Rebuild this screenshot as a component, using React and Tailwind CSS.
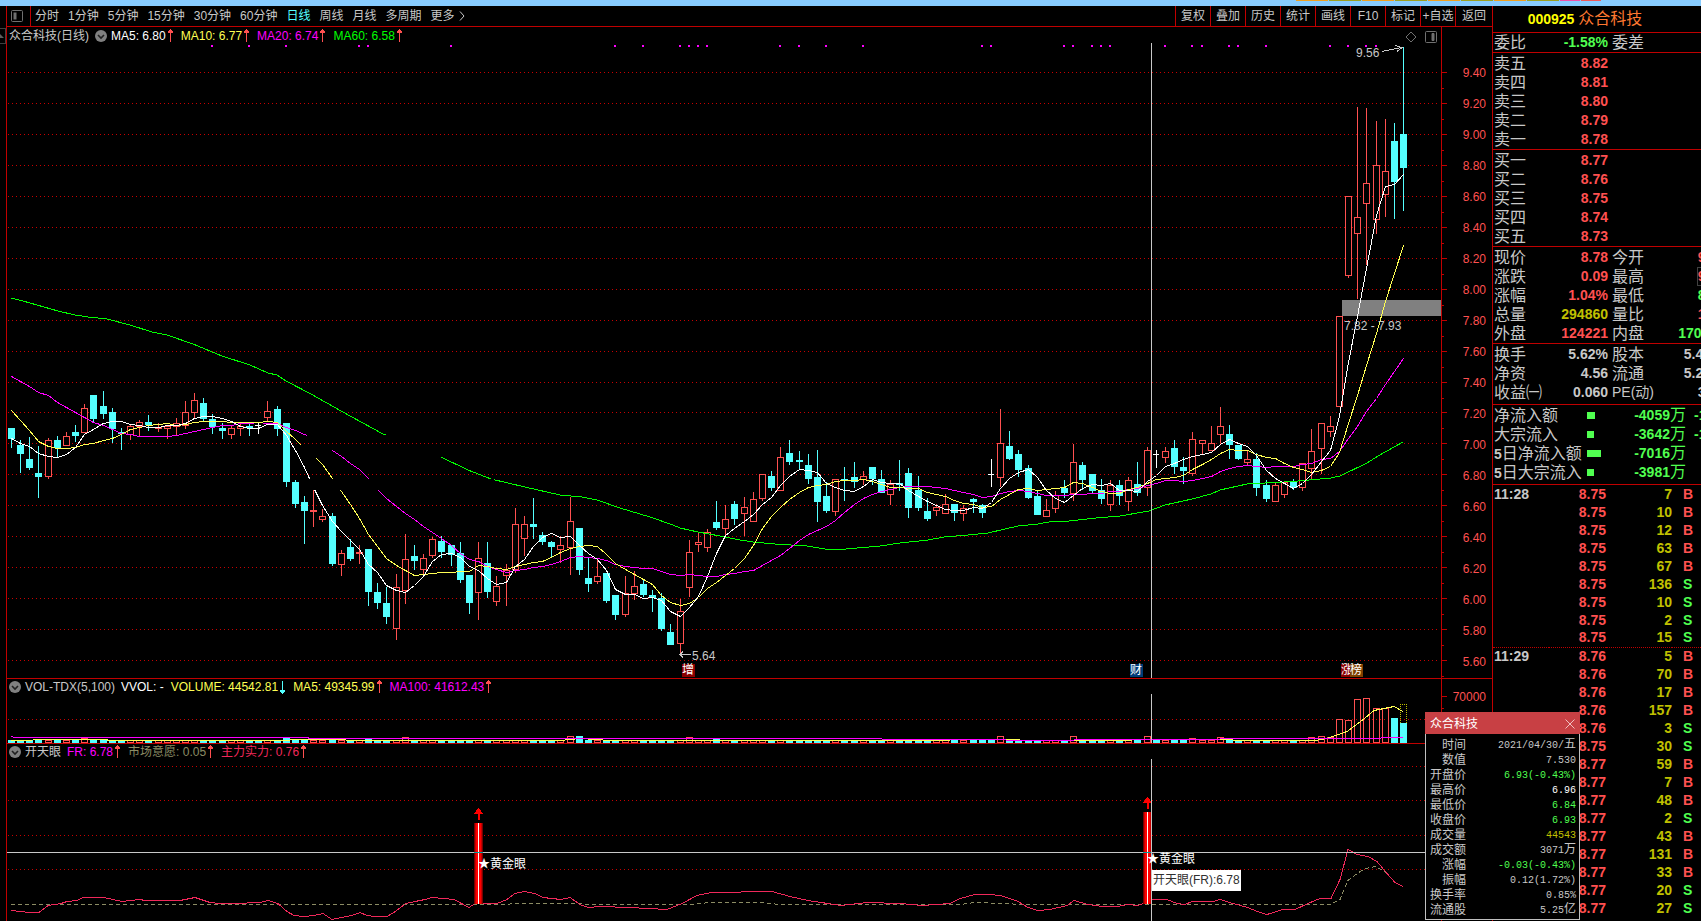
import React from "react";

// Each bar is kind,high,bodyTop,bodyBottom,low. The numbers are thirds of a pixel below `base`.
// U = up (hollow red), D = down (solid cyan), E = open equals close (white cross)
const barRuns = [
  {
    base: 1110,
    bars: `D,175,175,207,234 D,210,225,252,309 D,201,267,294,300 D,228,309,321,384 U,204,210,321,327
      D,198,210,235,261 U,186,198,228,228 D,165,186,198,216 U,102,114,189,189 D,75,75,147,156
      D,63,108,132,147 D,114,126,177,219 D,174,187,192,240 U,165,168,195,210 U,150,156,171,198
      D,135,156,165,183 U,159,171,177,186 U,165,168,177,207 U,144,159,171,198 U,93,126,168,177
      U,69,90,129,144 D,84,99,147,153 D,132,147,172,192 D,159,174,183,207 U,168,174,195,207
      U,162,168,177,198 D,162,168,175,198 E,159,164,164,192 U,93,123,144,153 D,108,117,177,198
      D,159,159,336,351 D,330,336,402,414 D,378,396,423,522 U,360,420,426,471 U,417,438,450,456
      D,429,438,582,588 U,540,549,585,618 D,507,531,567,573 U,525,546,552,582 D,537,537,666,708
      D,639,666,699,717 D,651,699,741,762 U,612,651,777,810 U,492,567,663,702 D,525,558,573,600
      U,552,564,600,612 U,501,507,558,564 D,498,513,546,564 D,525,525,555,588 D,516,549,630,639
      D,615,615,699,732`,
  },
  {
    base: 1200,
    bars: `U,426,474,578,660 D,426,489,576,594 U,528,558,606,618 U,492,510,528,618 U,324,372,510,518
      U,348,372,416,468 D,294,372,381,417 D,396,405,426,435 D,423,426,441,471 U,408,435,450,489
      U,291,363,444,525 D,384,384,510,525 D,474,534,552,576 U,474,528,546,552 D,519,519,603,609
      D,585,585,645,660 U,528,580,645,651 U,513,558,582,600 D,537,552,585,591 D,570,585,594,636
      D,579,594,687,693 D,672,696,735,735 U,597,633,732,765 U,420,456,564,591 U,399,426,435,456
      U,387,396,444,456 D,303,366,384,390 U,315,357,387,405 D,303,312,357,375 U,291,321,342,408
      U,276,297,366,366 U,222,222,297,303 D,213,228,264,273 U,141,171,273,273 D,120,159,186,195
      D,153,180,186,210 D,162,195,237,252 D,150,231,306,366 D,246,288,333,339 U,237,237,336,348
      D,201,237,242,303 D,186,231,246,264 U,213,228,239,255 D,201,201,237,255 D,210,237,279,279
      U,240,252,285,315 D,180,250,255,273 D,204,219,324,354 D,228,270,324,333 D,294,333,357,363
      U,312,321,333,348`,
  },
  {
    base: 1140,
    bars: `U,342,372,402,402 D,372,372,399,423 U,375,384,402,423 D,354,357,366,399 D,372,375,399,414
      E,237,281,281,321 U,87,189,294,321 D,153,198,237,240 D,210,222,270,291 D,255,264,354,357
      D,330,348,405,405 U,357,390,411,411 U,333,345,387,399 D,300,324,339,354 U,192,246,342,363
      D,246,255,300,330 D,282,282,333,339 D,297,330,357,372 U,300,315,375,393 D,300,315,348,375
      U,291,300,366,393 D,246,312,339,348 U,201,210,324,348 E,210,223,223,264 U,201,213,234,249
      D,180,204,261,282 D,231,261,273,312 U,156,177,282,288 U,180,180,192,222 U,138,189,213,213
      U,81,138,165,189 D,135,162,195,237 D,195,195,237,240 U,210,237,249,255 D,219,237,324,348
      D,300,315,357,366 U,306,315,366,366 U,303,306,345,354 D,297,303,324,330 U,249,249,324,333
      U,147,213,267,297 U,129,129,207,282 U,108,138,156,171`,
  },
  {
    base: 90,
    bars: `U,858,858,1131,1131 U,498,498,738,744 U,231,561,612,807 U,234,459,522,705 U,273,405,570,612
      U,267,423,495,561 D,279,333,456,567 D,51,312,414,543`,
  },
];

const xOf = (i) => Math.round(11 + i * 9.158);

const candles = barRuns
  .flatMap(({ base, bars }) =>
    bars.split(/\s+/).map((bar) => {
      const [kind, ...values] = bar.split(",");
      const [high, top, bottom, low] = values.map((v) => Math.round((base + Number(v)) / 3));
      return { kind, high, top, bottom, low, close: kind === "U" ? top : bottom };
    })
  )
  .map((candle, i) => ({ ...candle, x: xOf(i) }));

const movingAverage = (days, lead) =>
  candles
    .map((candle, i) => {
      const y =
        i < lead.length
          ? lead[i]
          : candles.slice(Math.max(0, i - days + 1), i + 1).reduce((sum, c) => sum + c.close, 0) / Math.min(days, i + 1);
      return `${candle.x + 0.5},${Math.round(y) + 0.5}`;
    })
    .join(" ");

const ma5 = movingAverage(5, [438, 443, 446, 453]);
const ma10 = movingAverage(10, [410, 420, 430, 441, 446, 448, 448, 447, 444]);
const ma20 = movingAverage(20, [376, 381, 386, 392, 395, 402, 407, 412, 417, 422, 425, 429, 433, 434, 436, 436, 436, 436, 435]);
const ma60 =
  "11,298 23,301 37,305 58,311 75,315 88,317 107,319 130,325 152,332 167,335 193,344 222,356 250,365 268,373 277,375 286,381 311,394 341,411 383,434 441,457 468,470 491,479 525,487 560,495 582,497 597,500 620,508 650,517 673,525 680,528 698,532 720,536 740,540 753,542 775,544 807,546 825,549 846,549 880,546 900,543 928,540 944,537 968,535 988,533 1018,526 1038,524 1054,521 1069,521 1096,518 1120,516 1149,511 1165,505 1192,499 1211,494 1220,490 1247,484 1284,482 1298,481 1320,479 1331,478 1340,476 1367,463 1378,456 1403,442";

const signalDots = [
  22, 26, 30, 38, 39, 48, 66, 69, 73, 74, 75, 76, 84, 86, 89, 93, 106, 107, 115, 116, 118, 119, 120, 126, 129, 130, 133,
  134, 137, 144, 146, 148, 149,
];

const gridRows = Array.from({ length: 20 }, (_, i) => Math.round(72 + i * 30.95));
const priceLabels = gridRows.map((_, i) => (9.4 - i * 0.2).toFixed(2));

const bigVolumes = {
  8: 5, 30: 5, 39: 5, 43: 6, 61: 7, 62: 7, 74: 6, 77: 4, 107: 4, 108: 7, 116: 7, 124: 7, 129: 5, 132: 6, 142: 6, 143: 7,
  144: 6, 145: 24, 146: 23, 147: 44, 148: 45, 149: 35, 150: 35, 151: 25, 152: 20,
};

const strength =
  "11,910 21,911 29,912 39,912 48,905 61,903 67,901 77,900 83,897 104,897 113,899 122,901 140,899 145,900 180,900 195,897 210,902 220,903 235,903 260,902 268,900 278,903 287,911 294,915 304,916 314,915 323,913 332,919 341,917 352,915 360,912 367,915 375,916 387,916 394,912 406,903 415,901 425,899 432,897 454,899 469,907 475,903 497,903 507,899 515,893 524,891 535,893 543,897 561,899 570,897 580,904 588,907 600,906 629,907 667,909 682,903 697,895 711,892 772,891 790,896 808,900 841,905 868,902 900,903 922,905 950,903 960,898 975,894 990,894 1000,895 1010,898 1018,901 1028,907 1038,910 1050,909 1067,905 1074,900 1088,904 1103,906 1117,906 1128,904 1138,905 1143,903 1152,899 1167,899 1177,903 1185,904 1192,901 1213,901 1220,899 1233,903 1248,907 1257,911 1267,914 1283,909 1295,909 1308,903 1320,898 1331,898 1340,879 1348,849 1357,854 1368,856 1377,861 1387,873 1395,882 1403,886";
const willing =
  "11,904 500,904 520,903 575,903 590,904 690,904 710,902 760,902 780,904 960,904 975,902 1005,903 1020,904 1330,904 1340,899 1348,880 1357,873 1365,868 1376,866 1387,873";

const periods = ["分时", "1分钟", "5分钟", "15分钟", "30分钟", "60分钟", "日线", "周线", "月线", "多周期"];
const tools = ["复权", "叠加", "历史", "统计", "画线", "F10", "标记", "+自选", "返回"];

const RED = "text-[#ff5050]";
const GREEN = "text-[#50ff50]";
const GRAY = "text-[#c8c8c8]";
const OLIVE = "text-[#c0c000]";

const sells = [["卖五", "8.82"], ["卖四", "8.81"], ["卖三", "8.80"], ["卖二", "8.79"], ["卖一", "8.78"]];
const buys = [["买一", "8.77"], ["买二", "8.76"], ["买三", "8.75"], ["买四", "8.74"], ["买五", "8.73"]];
const quotes = [
  ["现价", "8.78", RED, "今开", "9.00", RED],
  ["涨跌", "0.09", RED, "最高", "9.56", RED],
  ["涨幅", "1.04%", RED, "最低", "8.51", GREEN],
  ["总量", "294860", OLIVE, "量比", "1.00", RED],
  ["外盘", "124221", RED, "内盘", "170639", GREEN],
];
const fundamentals = [
  ["换手", "5.62%", GRAY, "股本", "5.43亿", GRAY],
  ["净资", "4.56", GRAY, "流通", "5.25亿", GRAY],
  ["收益㈠", "0.060", GRAY, "PE(动)", "36.3", GRAY],
];
const flows = [
  ["", "净流入额", "w-2", "-4059", "-1"],
  ["", "大宗流入", "w-[7px]", "-3642", "-1"],
  ["5", "日净流入额", "w-[14px]", "-7016", ""],
  ["5", "日大宗流入", "w-[7px]", "-3981", ""],
];
const deals = [
  ["11:28", "8.75", 7, "B"], ["", "8.75", 10, "B"], ["", "8.75", 12, "B"], ["", "8.75", 63, "B"], ["", "8.75", 67, "B"],
  ["", "8.75", 136, "S"], ["", "8.75", 10, "S"], ["", "8.75", 2, "S"], ["", "8.75", 15, "S"], ["11:29", "8.76", 5, "B"],
  ["", "8.76", 70, "B"], ["", "8.76", 17, "B"], ["", "8.76", 157, "B"], ["", "8.76", 3, "S"], ["", "8.75", 30, "S"],
  ["", "8.77", 59, "B"], ["", "8.77", 7, "B"], ["", "8.77", 48, "B"], ["", "8.77", 2, "S"], ["", "8.77", 43, "B"],
  ["", "8.77", 131, "B"], ["", "8.77", 33, "B"], ["", "8.77", 20, "S"], ["", "8.77", 27, "S"],
];
const dayInfo = [
  ["时间", "2021/04/30/", "五", GRAY],
  ["数值", "7.530", "", GRAY],
  ["开盘价", "6.93(-0.43%)", "", GREEN],
  ["最高价", "6.96", "", "text-white"],
  ["最低价", "6.84", "", GREEN],
  ["收盘价", "6.93", "", GREEN],
  ["成交量", "44543", "", OLIVE],
  ["成交额", "3071", "万", GRAY],
  ["涨幅", "-0.03(-0.43%)", "", GREEN],
  ["振幅", "0.12(1.72%)", "", GRAY],
  ["换手率", "0.85%", "", GRAY],
  ["流通股", "5.25", "亿", GRAY],
];

const priceBox = { x: 7, y: 27, w: 1434, h: 651 };
const volumeBox = { x: 7, y: 679, w: 1434, h: 64 };
const eyeBox = { x: 7, y: 744, w: 1434, h: 177 };

const Plot = ({ box, label, children }) => (
  <svg
    role="img"
    aria-label={label}
    className="absolute inset-0 h-full w-full"
    viewBox={`${box.x} ${box.y} ${box.w} ${box.h}`}
    preserveAspectRatio="none"
    shapeRendering="crispEdges"
    fill="none"
  >
    {children}
  </svg>
);

// Text pinned to a data point of a plot
const Pin = ({ box, x, y, className, children }) => (
  <span
    className={`absolute whitespace-nowrap leading-[13px] ${className}`}
    style={{ left: `${((x - box.x) / box.w) * 100}%`, top: `${((y - box.y) / box.h) * 100}%` }}
  >
    {children}
  </span>
);

const GridLine = ({ y, to = 1438 }) => (
  <line x1="8" x2={to} y1={y + 0.5} y2={y + 0.5} stroke="#c80000" strokeDasharray="1 3" />
);

const Trend = ({ down }) => (
  <svg width="7" height="14" viewBox="0 0 7 14" shapeRendering="crispEdges" className={down ? "rotate-180 text-[#54ffff]" : "text-[#ff5050]"} fill="currentColor">
    <path d="M3 0h1v1h1v1h1v2H1V2h1V1h1z" />
    <path d="M3 3h1v10H3z" />
  </svg>
);

const ToggleButton = ({ label }) => (
  <button type="button" aria-label={label} className="h-3 w-3 rounded-full bg-[#808080]">
    <svg viewBox="0 0 12 12" className="h-3 w-3" fill="none" stroke="#202020" strokeWidth="1.6">
      <path d="M3 5l3 3 3-3" />
    </svg>
  </button>
);

const Legend = ({ title, items, children }) => (
  <div className="relative flex h-4 items-center text-xs leading-4">
    {children}
    {title && <span className={GRAY}>{title}</span>}
    {items.map(([text, color, trend]) => (
      <span key={text} className={`mr-[7px] flex items-center gap-px whitespace-nowrap ${color}`}>
        {text}
        {trend && <Trend down={trend === "down"} />}
      </span>
    ))}
  </div>
);

const Candle = ({ kind, x, high, low, top, bottom }) => {
  if (kind === "E") {
    return <path d={`M${x} ${high}h1V${low}h-1zM${x - 3} ${top}h6v1h-6z`} fill="#fff" />;
  }
  if (kind === "D") {
    return <path d={`M${x} ${high}h1V${low}h-1zM${x - 3} ${top}h7v${Math.max(1, bottom - top)}h-7z`} fill="#54ffff" />;
  }
  return (
    <>
      <path d={`M${x} ${high}h1V${low}h-1z`} fill="#ff5050" />
      <rect x={x - 2.5} y={top + 0.5} width="6" height={Math.max(1, bottom - top - 1)} fill="#000" stroke="#ff5050" />
    </>
  );
};

const PriceChart = () => (
  <section className="flex min-h-0 flex-1 border-b border-[#c00000]">
    <div className="relative min-w-0 flex-1 pt-px">
      <Plot box={priceBox} label="众合科技 日线">
        {gridRows.map((y) => (
          <GridLine key={y} y={y} />
        ))}
        {signalDots.map((i) => (
          <rect key={i} x={xOf(i) - 1} y="45" width="2" height="2" fill="#ff00ff" />
        ))}
        <rect x="1342" y="300" width="99" height="16" fill="#808080" />
        {candles.map((candle) => (
          <Candle key={candle.x} {...candle} />
        ))}
        <mask id="ma-gaps" maskUnits="userSpaceOnUse" x="0" y="0" width="1700" height="700">
          <rect width="1700" height="700" fill="#fff" />
          <path d="M307 435H441V460H383V450H316V458H301V443H307zM309 479H494V490H309z" fill="#000" />
        </mask>
        <g mask="url(#ma-gaps)">
          <polyline points={ma60} stroke="#00ff00" />
          <polyline points={ma20} stroke="#ff00ff" />
          <polyline points={ma10} stroke="#ffff54" />
          <polyline points={ma5} stroke="#fff" />
        </g>
        <path d="M1382 51.5L1401 47.5M1395 45.5L1402 47.5L1397 51.5" stroke="#c8c8c8" />
        <path d="M680 654.5H691M683 651.5L680 654.5L683 657.5" stroke="#c8c8c8" />
        <rect x="1151" y="43" width="1" height="635" fill="#c8c8c8" />
      </Plot>
      <Legend
        items={[
          ["MA5: 6.80", "text-white", "up"],
          ["MA10: 6.77", "text-[#ffff54]", "up"],
          ["MA20: 6.74", "text-[#ff00ff]", "up"],
          ["MA60: 6.58", "text-[#00ff00]", "up"],
        ]}
      >
        <span className="ml-0.5 mr-1.5 text-[#c8c8c8]">众合科技(日线)</span>
        <span className="mr-1 flex">
          <ToggleButton label="主图指标" />
        </span>
      </Legend>
      <div className="absolute right-1 top-1 flex items-center gap-2">
        <svg width="12" height="12" viewBox="0 0 12 12" fill="none" stroke="#707070">
          <path d="M6 1l5 5-5 5-5-5z" />
        </svg>
        <svg width="12" height="12" viewBox="0 0 12 12" fill="none" stroke="#707070">
          <rect x=".5" y=".5" width="11" height="11" rx="1" />
          <path d="M7 2.5h2v7H7z" fill="#707070" />
        </svg>
      </div>
      <Pin box={priceBox} x={1356} y={47} className="text-xs text-[#c8c8c8]">9.56</Pin>
      <Pin box={priceBox} x={692} y={650} className="text-xs text-[#c8c8c8]">5.64</Pin>
      <Pin box={priceBox} x={1344} y={320} className="text-xs text-[#c8c8c8]">7.82 - 7.93</Pin>
      <Pin box={priceBox} x={682} y={664} className="w-[13px] bg-[#8b0000] text-xs text-white">增</Pin>
      <Pin box={priceBox} x={1130} y={664} className="w-[13px] bg-[#003c78] text-xs text-white">财</Pin>
      <Pin box={priceBox} x={1341} y={664} className="w-[13px] bg-[#8b0000] text-xs text-white">涨</Pin>
      <Pin box={priceBox} x={1350} y={664} className="w-[13px] bg-[#804000] text-xs text-white">榜</Pin>
    </div>
    <div className="relative w-[51px] border-l border-[#c00000]">
      <svg className="absolute inset-0 h-full w-full" viewBox="0 27 50 651" preserveAspectRatio="none" shapeRendering="crispEdges" fill="#c00000">
        {gridRows.map((y) => (
          <path key={y} d={`M0 ${y}h5v1H0zM0 ${y + 16}h2v1H0z`} />
        ))}
      </svg>
      <div className="relative flex h-full flex-col justify-between pb-2 pr-1.5 pt-[38px] text-right text-xs text-[#ff5050]">
        {priceLabels.map((label) => (
          <span key={label}>{label}</span>
        ))}
      </div>
    </div>
  </section>
);

const VolumeChart = () => (
  <section className="flex h-[65px] shrink-0 border-b border-[#c00000]">
    <div className="relative min-w-0 flex-1">
      <Plot box={volumeBox} label="VOL-TDX">
        <GridLine y={719} />
        {candles.map(({ x, kind }, i) => {
          const height = bigVolumes[i] ?? 3;
          return kind === "U" ? (
            <rect key={x} x={x - 2.5} y={743.5 - height} width="6" height={height - 1} stroke="#ff5050" />
          ) : (
            <rect key={x} x={x - 3} y={743 - height} width="7" height={height} fill="#54ffff" />
          );
        })}
        <path d="M1400.5 723V704.5H1406.5V723" stroke="#c0c000" strokeDasharray="1 1" />
        <polyline
          points="11,740.5 55,739.5 160,740.5 280,740.5 300,739.5 390,740.5 560,740.5 580,738.5 610,740.5 900,740.5 1000,739.5 1040,740.5 1225,739.5 1240,740.5 1315,740.5 1327,738.5 1347,731.5 1362,720.5 1374,710.5 1394,706.5 1403,711.5"
          stroke="#ffff54"
        />
        <polyline points="11,736.5 15,737.5 308,737.5 309,738.5 820,738.5 1068,740.5 1080,739.5 1360,738.5 1403,737.5" stroke="#ff00ff" />
        <rect x="1151" y="694" width="1" height="49" fill="#c8c8c8" />
      </Plot>
      <Legend
        items={[
          ["VVOL: -", "text-white ml-1.5"],
          ["VOLUME: 44542.81", "text-[#ffff54]", "down"],
          ["MA5: 49345.99", "text-[#ffff54]", "up"],
          ["MA100: 41612.43", "text-[#ff00ff]", "up"],
        ]}
        title="VOL-TDX(5,100)"
      >
        <span className="ml-0.5 mr-1 flex">
          <ToggleButton label="成交量指标" />
        </span>
      </Legend>
    </div>
    <div className="relative w-[51px] border-l border-[#c00000] pr-1.5 pt-2.5 text-right text-xs text-[#ff5050]">
      <svg className="absolute left-0 top-0" width="6" height="64" viewBox="0 679 6 64" shapeRendering="crispEdges" fill="#c00000">
        <path d="M0 696h5v1H0zM0 708h2v1H0zM0 719h5v1H0z" />
      </svg>
      70000
    </div>
  </section>
);

const EyeSignal = ({ x, top }) => (
  <g>
    <rect x={x - 4} y={top} width="9" height={904 - top} fill="#780000" />
    <rect x={x - 3} y={top} width="7" height={904 - top} fill="#c80000" />
    <rect x={x - 2} y={top} width="5" height={904 - top} fill="#ff0000" />
    <rect x={x} y={top} width="1" height={904 - top} fill="#fff" />
    <path d={`M${x + 0.5} ${top - 15}l5 6h-4v6h-2v-6h-4z`} fill="#ff0000" />
  </g>
);

const EyeChart = () => (
  <section className="flex h-[177px] shrink-0">
    <div className="relative min-w-0 flex-1">
      <Plot box={eyeBox} label="开天眼">
        {[766, 800, 835, 869].map((y) => (
          <GridLine key={y} y={y} />
        ))}
        <polyline points={willing} stroke="#8c8c64" strokeDasharray="4 3" transform="translate(0 .5)" />
        <polyline points={strength} stroke="#f0285a" transform="translate(0 .5)" />
        <EyeSignal x={478} top={823} />
        <EyeSignal x={1147} top={812} />
        <rect x="7" y="852" width="1434" height="1" fill="#c8c8c8" />
        <path d="M474 852h9v1h-9zM1143 852h9v1h-9z" fill="#00a0a0" />
        <rect x="1151" y="759" width="1" height="162" fill="#c8c8c8" />
      </Plot>
      <Legend
        items={[
          ["FR: 6.78", "text-[#ff00ff] ml-1.5", "up"],
          ["市场意愿: 0.05", "text-[#8c8c64]", "up"],
          ["主力实力: 0.76", "text-[#f0285a]", "up"],
        ]}
        title="开天眼"
      >
        <span className="ml-0.5 mr-1 flex">
          <ToggleButton label="开天眼指标" />
        </span>
      </Legend>
      <Pin box={eyeBox} x={478} y={858} className="text-xs text-white">★黄金眼</Pin>
      <Pin box={eyeBox} x={1147} y={853} className="text-xs text-white">★黄金眼</Pin>
      <Pin box={eyeBox} x={1152} y={870} className="bg-white px-px py-1 text-xs text-[#303030]">开天眼(FR):6.78</Pin>
    </div>
    <div className="w-[51px] border-l border-[#c00000]" />
  </section>
);

const Toolbar = () => (
  <nav className="flex h-[21px] shrink-0 items-stretch border-b border-[#c00000] text-xs text-[#c8c8c8]">
    <button type="button" aria-label="侧栏" className="flex w-6 items-center justify-center border-r border-[#c00000] pr-1">
      <svg width="12" height="12" viewBox="0 0 12 12" fill="none" stroke="#707070">
        <rect x=".5" y=".5" width="11" height="11" rx="1" />
        <path d="M2.5 2.5h3v7h-3z" fill="#707070" stroke="none" />
      </svg>
    </button>
    <div className="flex gap-[9px] whitespace-nowrap pl-1">
      {periods.map((name) => (
        <button key={name} type="button" className={name === "日线" ? "text-[#54ffff]" : ""}>
          {name}
        </button>
      ))}
      <button type="button" className="flex items-center gap-1">
        更多
        <svg width="6" height="10" viewBox="0 0 6 10" fill="none" stroke="currentColor">
          <path d="M1 .5L5 5 1 9.5" />
        </svg>
      </button>
    </div>
    <div className="ml-auto flex whitespace-nowrap">
      {tools.map((name) => (
        <button key={name} type="button" className="w-[35px] border-l border-[#c00000] text-center last:w-[37px]">
          {name}
        </button>
      ))}
    </div>
  </nav>
);

const QuoteTable = ({ rows }) => (
  <table className="w-[232px] table-fixed border-collapse">
    <tbody>
      {rows.map(([label, value, color, label2, value2, color2]) => (
        <tr key={label} className="h-[19px]">
          <th className="w-[52px] whitespace-nowrap p-0 pl-px text-left text-base font-normal leading-[19px] text-[#c8c8c8]">{label}</th>
          <td className={`w-[63px] p-0 text-right leading-[19px] ${color}`}>{value}</td>
          <th className={`w-[52px] whitespace-nowrap p-0 pl-1 text-left font-normal leading-[19px] text-[#c8c8c8] ${label2 === "PE(动)" ? "text-sm" : "text-base"}`}>
            {label2}
          </th>
          <td className={`whitespace-nowrap p-0 text-right leading-[19px] ${color2}`}>
            {label2 === "最高" ? <span className="inline-block leading-[17px] outline outline-[#404040]">{value2}</span> : value2}
          </td>
        </tr>
      ))}
    </tbody>
  </table>
);

const LevelTable = ({ rows }) => (
  <div className="border-b border-[#c00000] pt-px">
    <QuoteTable rows={rows.map(([label, price]) => [label, price, RED, "", "", ""])} />
  </div>
);

const QuotePanel = () => (
  <aside className="w-[209px] shrink-0 overflow-hidden border-l border-[#c00000] text-sm font-bold">
    <h1 className="flex h-[27px] items-center justify-center gap-1 border-b border-[#c00000] pr-6">
      <span className="text-[#ffff00]">000925</span>
      <span className="text-base font-normal text-[#ff7830]">众合科技</span>
    </h1>
    <div className="border-b border-[#c00000]">
      <QuoteTable rows={[["委比", "-1.58%", GREEN, "委差", "", ""]]} />
    </div>
    <LevelTable rows={sells} />
    <LevelTable rows={buys} />
    <div className="border-b border-[#c00000] pt-px">
      <QuoteTable rows={quotes} />
    </div>
    <div className="border-b border-[#c00000] pb-0.5 pt-px">
      <QuoteTable rows={fundamentals} />
    </div>
    <div className="border-b border-[#c00000] pb-0.5 pt-px">
      <table className="w-[232px] table-fixed border-collapse">
        <tbody>
          {flows.map(([days, label, width, value, next]) => (
            <tr key={days + label} className="h-[19px]">
              <th className="w-[94px] whitespace-nowrap p-0 pl-px text-left text-base font-normal leading-[19px] text-[#c8c8c8]">
                {days && <span className="text-sm font-bold leading-none">{days}</span>}
                {label}
              </th>
              <td className="w-[20px] p-0">
                <div className={`h-[7px] bg-[#50ff50] ${width}`} />
              </td>
              <td className="w-[79px] whitespace-nowrap p-0 text-right leading-[19px] text-[#50ff50]">
                {value}
                <span className="text-base font-normal leading-none">万</span>
              </td>
              <td className="p-0 pl-2 leading-[19px] text-[#50ff50]">{next}</td>
            </tr>
          ))}
        </tbody>
      </table>
    </div>
    <table className="w-full table-fixed border-collapse">
      <tbody>
        {deals.map(([time, price, lots, side], i) => (
          <tr key={i} className={`h-[18px] ${i === 9 ? "border-t border-dotted border-[#c00000]" : ""}`}>
            <td className="w-[56px] p-0 pl-px leading-[17px] text-[#c8c8c8]">{time}</td>
            <td className="w-[57px] p-0 text-right leading-[17px] text-[#ff5050]">{price}</td>
            <td className="w-[66px] p-0 text-right leading-[17px] text-[#c0c000]">{lots}</td>
            <td className={`p-0 pl-[11px] leading-[17px] ${side === "B" ? RED : GREEN}`}>{side}</td>
          </tr>
        ))}
      </tbody>
    </table>
  </aside>
);

const DayPopup = () => (
  <div role="dialog" aria-label="众合科技" className="absolute bottom-px right-[121px] w-[155px] bg-black text-xs">
    <div className="flex h-[22px] items-center justify-between bg-[#c84044] px-[5px] pt-px text-white">
      众合科技
      <button type="button" aria-label="关闭">
        <svg width="10" height="10" viewBox="0 0 10 10" fill="none" stroke="#f0c0c0">
          <path d="M.5.5l9 9M9.5.5l-9 9" />
        </svg>
      </button>
    </div>
    <div className="border border-t-0 border-[#c0c0c0] px-[3px] pb-px pt-1">
      <table className="w-full table-fixed border-collapse">
        <tbody>
          {dayInfo.map(([label, value, unit, color]) => (
            <tr key={label} className="h-[15px]">
              <th className="w-[37px] whitespace-nowrap p-0 text-right font-normal leading-[15px] text-[#c8c8c8]">{label}</th>
              <td className={`whitespace-nowrap p-0 text-right font-['Liberation_Mono','Noto_Sans_CJK_SC',monospace] text-[10px] leading-[15px] ${color}`}>
                {value}
                {unit && <span className="text-xs leading-none">{unit}</span>}
              </td>
            </tr>
          ))}
        </tbody>
      </table>
    </div>
  </div>
);

const App = () => (
  <div className="relative flex h-screen flex-col overflow-hidden bg-black font-['Liberation_Sans','Noto_Sans_CJK_SC',sans-serif]">
    <div className="flex h-1.5 shrink-0 justify-end gap-px bg-[#87ccff] pr-[100px]">
      {[1, 2, 3, 4].map((n) => (
        <React.Fragment key={n}>
          <i className="h-px w-8 bg-[#f0a020]" />
          <i className="h-px w-8 bg-[#9ca020]" />
        </React.Fragment>
      ))}
      <i className="h-px w-5 bg-[#f050a8]" />
      <i className="h-px w-5 bg-[#f05858]" />
    </div>
    <div className="flex min-h-0 flex-1">
      <div className="w-1.5 shrink-0 pt-[22px]">
        <div className="flex h-4 items-center border border-l-0 border-[#404040]">
          <svg width="4" height="4" viewBox="0 0 4 4" fill="#606060">
            <path d="M0 0l4 4H0z" />
          </svg>
        </div>
      </div>
      <main className="flex min-w-0 flex-1 flex-col border-l border-[#c00000]">
        <Toolbar />
        <PriceChart />
        <VolumeChart />
        <EyeChart />
      </main>
      <QuotePanel />
    </div>
    <DayPopup />
  </div>
);

export default App;
